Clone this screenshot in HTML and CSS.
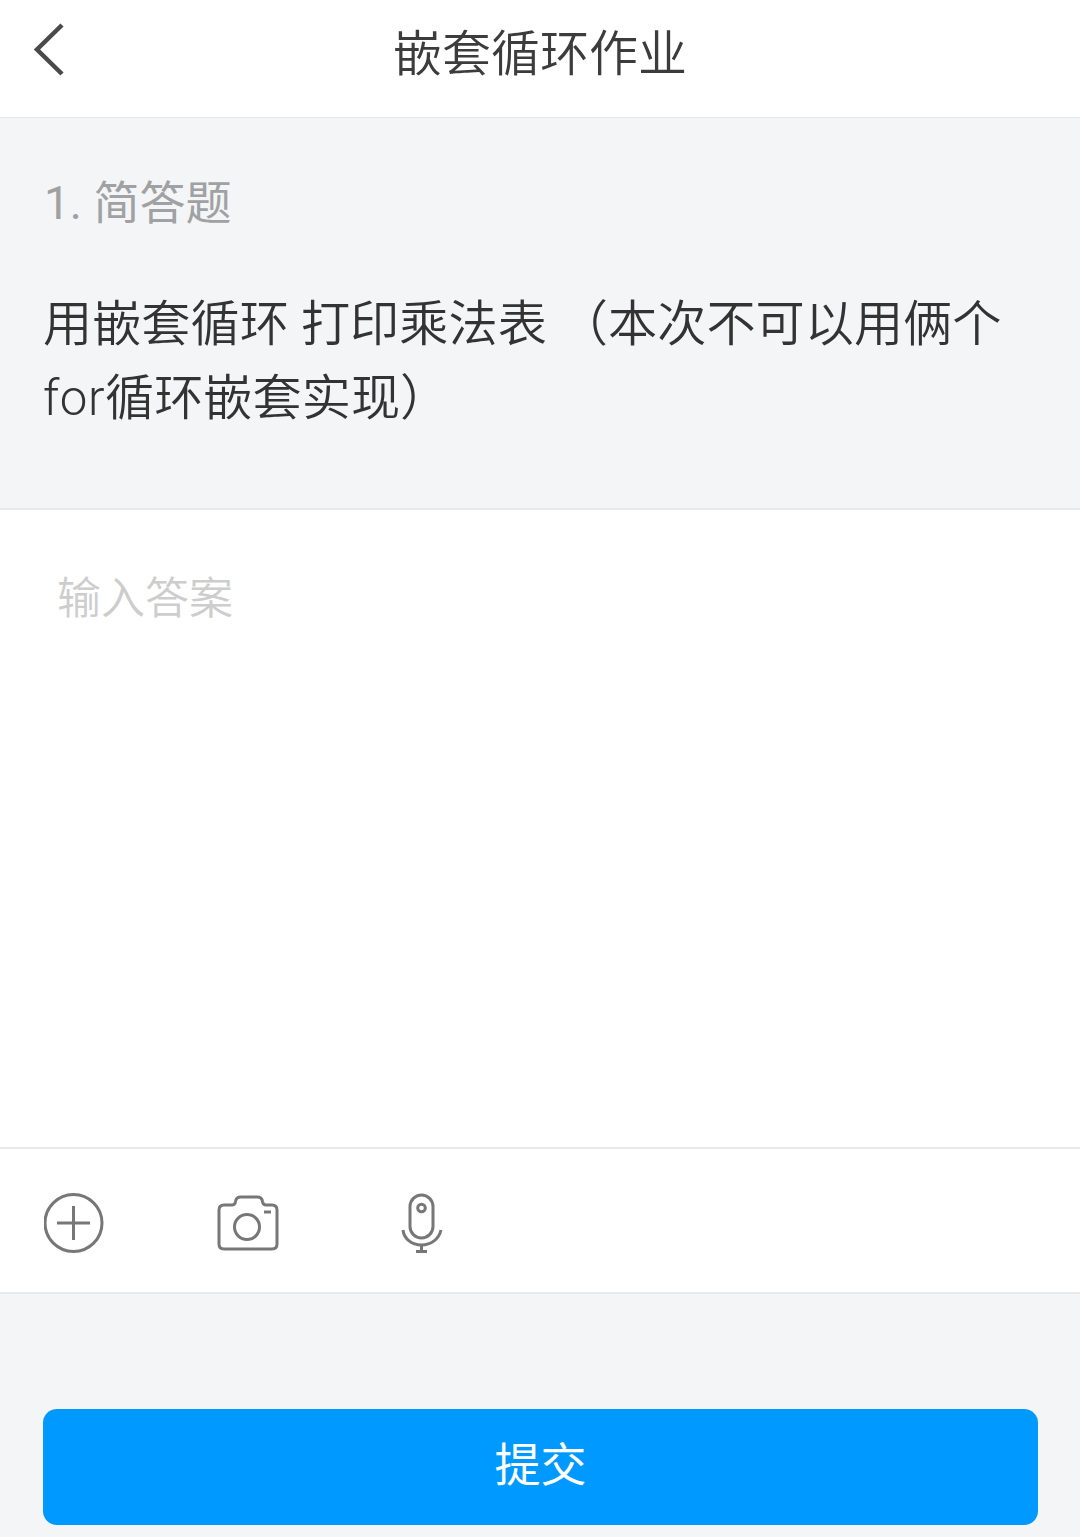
FILE: index.html
```html
<!DOCTYPE html>
<html lang="zh-CN">
<head>
    <meta charset="UTF-8">
    <meta name="viewport" content="width=device-width, initial-scale=1.0">
    <title>嵌套循环作业</title>
    <link rel="stylesheet" href="styles.css">
</head>
<body>
    <div class="page">
        <header class="topbar">
            <button class="back-btn" type="button" aria-label="返回">
                <svg width="32" height="54" viewBox="0 0 32 54" fill="none" stroke="#4a4a4a" stroke-width="4.5">
                    <path d="M29 2 L4 26.500 L29 51"/>
                </svg>
            </button>
            <h1 class="topbar-title">嵌套循环作业</h1>
        </header>

        <section class="question">
            <div class="question-type">1. 简答题</div>
            <p class="question-text">用嵌套循环 打印乘法表 （本次不可以用俩个<span class="latin">for</span>循环嵌套实现）</p>
        </section>

        <textarea class="answer" placeholder="输入答案"></textarea>

        <div class="toolbar">
            <button class="tool-btn" type="button" aria-label="添加">
                <svg width="60" height="62" viewBox="0 0 60 62" fill="none" stroke="#777" stroke-width="3">
                    <circle cx="29.500" cy="31" r="28.500"/>
                    <path d="M29.500 14 V48 M13 31 H46"/>
                </svg>
            </button>
            <button class="tool-btn" type="button" aria-label="拍照">
                <svg width="62" height="56" viewBox="0 0 62 56" fill="none" stroke="#777" stroke-width="3">
                    <path d="M7 10 H15 Q18 10 18.500 6.500 Q19 2 24 2 H40 Q45 2 45.500 6.500 Q46 10 49 10 H55 Q60 10 60 15 V49 Q60 54 55 54 H7 Q2 54 2 49 V15 Q2 10 7 10 Z"/>
                    <circle cx="30" cy="32" r="12.500"/>
                    <path d="M47 17 H54"/>
                </svg>
            </button>
            <button class="tool-btn" type="button" aria-label="语音">
                <svg width="42" height="60" viewBox="0 0 42 60" fill="none" stroke="#777" stroke-width="3">
                    <rect x="9" y="2" width="23" height="43" rx="11.500"/>
                    <circle cx="20.500" cy="15" r="3.800"/>
                    <path d="M2 37 C3 46 11 52 20.500 52 C30 52 38 46 40 37"/>
                    <path d="M20.500 52 V58 M15 58.500 H26"/>
                </svg>
            </button>
        </div>

        <div class="footer">
            <button class="submit-btn" type="button">提交</button>
        </div>
    </div>
</body>
</html>
```

FILE: styles.css
```css
* {
    box-sizing: border-box;
}

body {
    margin: 0;
    padding: 0;
    background-color: #f4f5f7;
    font-family: Roboto, "Noto Sans CJK SC", sans-serif;
}

button {
    padding: 0;
    border: none;
    background: none;
    font-family: inherit;
    cursor: pointer;
}

.page {
    display: flex;
    flex-direction: column;
    height: 1537px;
}

.topbar {
    position: relative;
    display: flex;
    align-items: center;
    justify-content: center;
    height: 118px;
    background-color: #fff;
    border-bottom: 1px solid #e6e7e9;
}

.back-btn {
    position: absolute;
    left: 33px;
    top: 23px;
    height: 54px;
}

.topbar-title {
    margin: 0 0 8px;
    font-size: 49px;
    font-weight: 350;
    line-height: 70px;
    color: #3c3c3c;
}

.question {
    height: 392px;
    padding: 51px 36px 0 43px;
    background-color: #f4f5f7;
    border-bottom: 2px solid #e8e9eb;
}

.question-type {
    padding-left: 1px;
    font-size: 46px;
    line-height: 68px;
    color: #a0a1a3;
}

.question-text {
    margin: 50px 0 0;
    font-size: 49.200px;
    font-weight: 350;
    line-height: 74px;
    color: #333;
}

.latin {
    letter-spacing: 0.500px;
}

.answer {
    display: block;
    width: 100%;
    height: 637px;
    padding: 57px 57px;
    border: none;
    outline: none;
    resize: none;
    background-color: #fff;
    font-family: inherit;
    font-size: 44px;
    font-weight: 350;
    line-height: 64px;
    color: #333;
}

.answer::placeholder {
    color: #cdcdcd;
    opacity: 1;
}

.toolbar {
    display: flex;
    align-items: center;
    height: 147px;
    padding: 5px 0 0 43px;
    background-color: #fff;
    border-top: 2px solid #e8e9eb;
    border-bottom: 2px solid #e8e9eb;
}

.tool-btn {
    display: flex;
    align-items: center;
    justify-content: center;
    width: 62px;
    margin-right: 112px;
}

.tool-btn svg {
    display: block;
}

.footer {
    flex: 1;
    padding: 115px 42px 0 43px;
}

.submit-btn {
    display: block;
    width: 100%;
    height: 116px;
    padding-bottom: 12px;
    border-radius: 14px;
    background-color: #0099ff;
    font-size: 46px;
    color: #fff;
}
```
